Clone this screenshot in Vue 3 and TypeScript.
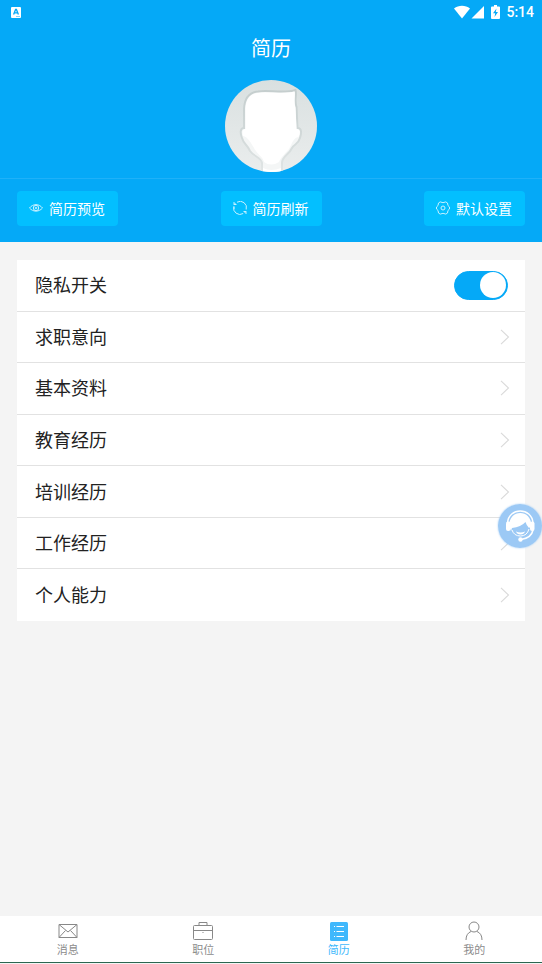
<script setup lang="ts">
import { ref } from 'vue'

const privacy = ref(true)
const entries: string[] = ['求职意向', '基本资料', '教育经历', '培训经历', '工作经历', '个人能力']
</script>

<template>
  <div class="page">
    <header class="hero">
      <div class="status">
        <svg class="status-app" width="10" height="11" viewBox="0 0 10 11" aria-hidden="true">
          <rect width="10" height="11" rx="1" fill="#fff" />
          <path d="M2.600 7.500 4.600 2.500h.8l2 5M3.400 5.800h3.200" fill="none" stroke="#05a9f7" stroke-width="1.300" />
          <path d="M5 9.500h4" stroke="#8bd5fb" stroke-width="1" />
        </svg>
        <div class="status-right">
          <svg width="31" height="14" viewBox="0 0 31 14" aria-hidden="true">
            <path d="M0 3.600C4.500-.2 11.500-.2 16 3.600L8 13.500Z" fill="#fff" />
            <path d="M30 1v12.500H17.500Z" fill="#fff" />
          </svg>
          <svg class="battery" width="9" height="14" viewBox="0 0 9 14" aria-hidden="true">
            <path d="M3 0h3v1.500h2q1 0 1 1V13q0 1-1 1H1q-1 0-1-1V2.500q0-1 1-1h2Z" fill="#fff" />
            <path d="M5.500 3.500 2 8.300h2.200L3.500 12 7 7H4.800Z" fill="#05a9f7" />
          </svg>
          <span class="clock">5:14</span>
        </div>
      </div>
      <h1 class="title">简历</h1>
      <svg class="avatar" width="92" height="92" viewBox="0 0 92 92" role="img" aria-label="头像">
        <defs>
          <clipPath id="avatar-clip"><circle cx="46" cy="46" r="46" /></clipPath>
          <linearGradient id="avatar-bg" x1="0" y1="0" x2="0" y2="1">
            <stop offset="0" stop-color="#d9e0e0" />
            <stop offset="1" stop-color="#eaeded" />
          </linearGradient>
          <linearGradient id="avatar-edge" x1="0" y1="0" x2="0" y2="1">
            <stop offset="0" stop-color="#c5cece" />
            <stop offset=".6" stop-color="#d3dada" />
            <stop offset="1" stop-color="#e2e6e6" />
          </linearGradient>
        </defs>
        <g clip-path="url(#avatar-clip)">
          <rect width="92" height="92" fill="url(#avatar-bg)" />
          <path
            d="M19 48V29C19.500 18 24 12.500 33 11.500C44 9.500 58 14 70.500 10C72 15 69 20 71.500 27L72.500 48C77 48 76.500 53 75 58C73 65 69 64 67 68C64 75 57 76 57 83V94H37V83C36 77 29 77 25 71C22 64 19 65 17 58C15 53 15 48 19 48Z"
            fill="#f4f6f6" stroke="url(#avatar-edge)" stroke-width="2"
          />
          <path
            d="M20.500 49V29C21 19 25 14 33 13C44 11.500 58 14.500 69.500 11.500C70.500 16 68.500 21 70.500 28L71.500 49C76 49 75 54 73.500 57C68 58 67 64 64 69C59 75 56 77 54 82Q46 87 39 82C38 77 32 74 29 68C26 63 23 57 18 56C17 52 17 49 20.500 49Z"
            fill="#fff"
          />
          <path d="M38 88Q46 92 56 88V94H38Z" fill="#fff" />
        </g>
      </svg>
      <div class="actions">
        <button type="button" class="action">
          <svg width="14" height="14" viewBox="0 0 14 14" aria-hidden="true">
            <path d="M.5 7C4 2.500 10 2.500 13.500 7 10 11.200 4 11.200.5 7Z" />
            <circle cx="7" cy="7" r="2.700" /><circle cx="7" cy="7" r=".8" />
          </svg>
          <span>简历预览</span>
        </button>
        <button type="button" class="action">
          <svg width="14" height="14" viewBox="0 0 14 14" aria-hidden="true">
            <path d="M4 1.200A6.300 6.300 0 0 1 13.200 8.500M10.200 12.500A6.300 6.300 0 0 1 .8 5.500M1 1v2.500h2.500M13 13v-2.500h-2.500M1 3.500 2.500 2M13 10.500 11.500 12M1 5.500V8" />
          </svg>
          <span>简历刷新</span>
        </button>
        <button type="button" class="action">
          <svg width="14" height="14" viewBox="0 0 14 14" aria-hidden="true">
            <path d="M4.200.9Q7 2.500 9.800.9L11.500 2Q11.400 5 13.500 6v2Q11.400 9 11.500 12l-1.700 1.100Q7 11.500 4.200 13.100L2.500 12Q2.600 9 .5 8V6Q2.600 5 2.500 2Z" />
            <circle cx="7" cy="7" r="2" />
          </svg>
          <span>默认设置</span>
        </button>
      </div>
    </header>

    <main class="content">
      <ul class="list">
        <li class="row">
          <label for="privacy" class="name">隐私开关</label>
          <input id="privacy" v-model="privacy" class="switch" type="checkbox" role="switch" />
        </li>
        <li v-for="entry in entries" :key="entry" class="row">
          <a href="#" class="entry">
            <span class="name">{{ entry }}</span>
            <svg width="10" height="16" viewBox="0 0 10 16" aria-hidden="true">
              <path d="M1 .8 8.500 8 1 15.200" fill="none" stroke="#dadada" stroke-width="1.100" />
            </svg>
          </a>
        </li>
      </ul>
    </main>

    <button type="button" class="service" aria-label="在线客服">
      <svg width="44" height="44" viewBox="0 0 44 44" aria-hidden="true">
        <circle cx="22" cy="22" r="22" fill="#9cc9f5" />
        <path d="M9.500 19C10.500 3 34 3 35 19" fill="none" stroke="#fff" stroke-width="1.500" />
        <path d="M11 22C11 4.500 33.500 4.500 33.500 22L31 24Q28.500 21.500 27.500 18Q23 23 14 24L13 27Z" fill="#fff" />
        <rect x="8" y="17.500" width="4.500" height="9.500" rx="2" fill="#fff" />
        <rect x="32" y="17.500" width="4.500" height="9.500" rx="2" fill="#fff" />
        <path d="M14 26Q16 32 22.500 32T31 25" fill="none" stroke="#fff" stroke-width="1" />
        <path d="M35 26Q33.500 34 23 35.500" fill="none" stroke="#fff" stroke-width="1.500" />
        <path d="M18 27.500Q22.500 29.500 27 27.500Q26 30.500 22.500 30.500T18 27.500Z" fill="#fff" />
        <circle cx="22.500" cy="35.500" r="2.200" fill="#fff" />
      </svg>
    </button>

    <nav class="tabs">
      <a href="#" class="tab">
        <svg width="20" height="20" viewBox="0 0 20 20" aria-hidden="true">
          <path d="M1 3.500h18v13H1ZM1 3.500l9 7.500 9-7.500M1 16.500l6.500-7M19 16.500l-6.500-7" />
        </svg>
        <span>消息</span>
      </a>
      <a href="#" class="tab">
        <svg width="20" height="20" viewBox="0 0 20 20" aria-hidden="true">
          <rect x=".5" y="4.500" width="19" height="14" rx="1" />
          <path d="M6 4.500v-3h8v3M.5 9.500h19M9.500 11.500h1" />
        </svg>
        <span>职位</span>
      </a>
      <a href="#" class="tab active" aria-current="page">
        <svg width="20" height="20" viewBox="0 0 20 20" aria-hidden="true">
          <rect x="1" y="1" width="18" height="19" rx="1.500" fill="#40b8fc" stroke="none" />
          <path d="M7.500 5.500H15M7.500 10.500H15M7.500 15.500H15M5 5.500h1M5 10.500h1M5 15.500h1" stroke="#fff" />
        </svg>
        <span>简历</span>
      </a>
      <a href="#" class="tab">
        <svg width="20" height="20" viewBox="0 0 20 20" aria-hidden="true">
          <circle cx="10" cy="6" r="5" />
          <path d="M2 19Q2 12.500 7 10.500M13 10.500Q18 12.500 18 19" />
        </svg>
        <span>我的</span>
      </a>
    </nav>
  </div>
</template>

<style>
body {
  margin: 0;
  background: #f4f4f4;
}
</style>

<style scoped>
.page {
  display: flex;
  flex-direction: column;
  min-height: 100vh;
  box-sizing: border-box;
  background: #f4f4f4;
  color: #222;
  font-family: Roboto, "Noto Sans CJK SC", sans-serif;
}
.hero {
  display: flex;
  flex-direction: column;
  align-items: center;
  background: #05a9f7;
  color: #fff;
}
.status {
  display: flex;
  align-self: stretch;
  align-items: center;
  justify-content: space-between;
  box-sizing: border-box;
  height: 24px;
  padding: 0 8px 0 11px;
}
.status-right {
  display: flex;
  align-items: center;
}
.battery {
  margin: 0 6px;
}
.clock {
  font-size: 14px;
  font-weight: 500;
}
.title {
  margin: 9px 0 15px;
  font-size: 20px;
  font-weight: 400;
  line-height: 32px;
}
.avatar {
  display: block;
}
.actions {
  display: flex;
  align-self: stretch;
  justify-content: space-between;
  margin-top: 6px;
  padding: 12px 17px 16px;
  border-top: 1px solid #1fb1f8;
}
.action {
  display: flex;
  align-items: center;
  gap: 6px;
  height: 35px;
  padding: 0 13px 2px 12px;
  border: 0;
  border-radius: 4px;
  background: #03bfff;
  color: #fff;
  font: inherit;
  font-size: 14px;
}
.action svg {
  fill: none;
  stroke: #c8f1ff;
  stroke-width: 1;
}
.content {
  flex: 1;
  padding: 18px 17px;
}
.list {
  display: grid;
  grid-auto-rows: 1fr;
  min-height: 361px;
  margin: 0;
  padding: 0;
  list-style: none;
  background: #fff;
  font-size: 18px;
}
.row {
  display: flex;
  align-items: center;
  justify-content: space-between;
  padding: 0 17px 0 18px;
  border-bottom: 1px solid #e2e2e2;
}
.row + .row {
  padding-right: 15px;
}
.row:last-child {
  border-bottom-color: transparent;
}
.name {
  padding-bottom: 2px;
}
.entry {
  display: flex;
  flex: 1;
  align-items: center;
  justify-content: space-between;
  color: inherit;
  text-decoration: none;
}
.switch {
  display: flex;
  align-items: center;
  box-sizing: border-box;
  width: 54px;
  height: 29px;
  margin: 0;
  padding: 0 1px;
  border: 1px solid #ccc;
  border-radius: 15px;
  background: #ccc;
  appearance: none;
}
.switch::before {
  width: 26px;
  height: 26px;
  border-radius: 50%;
  background: #fff;
  content: "";
}
.switch:checked {
  justify-content: flex-end;
  border-color: #05a9f7;
  background: #05a9f7;
}
.service {
  position: fixed;
  right: 0;
  bottom: 416px;
  padding: 0;
  border: 0;
  border-radius: 50%;
  background: none;
  box-shadow: 0 0 2px #9cc9f5;
}
.service svg {
  display: block;
}
.tabs {
  display: grid;
  grid-template-columns: repeat(4, 1fr);
  height: 46px;
  margin-bottom: 1px;
  border-bottom: 1px solid #2c6650;
  background: #fff;
}
.tab {
  display: flex;
  flex-direction: column;
  align-items: center;
  padding-top: 5px;
  color: #8c8c8c;
  font-size: 11px;
  line-height: 14px;
  text-decoration: none;
}
.tab span {
  padding-top: 3px;
}
.tab svg {
  fill: none;
  stroke: #888;
  stroke-width: 1;
}
.active {
  color: #40b8fc;
}
</style>
